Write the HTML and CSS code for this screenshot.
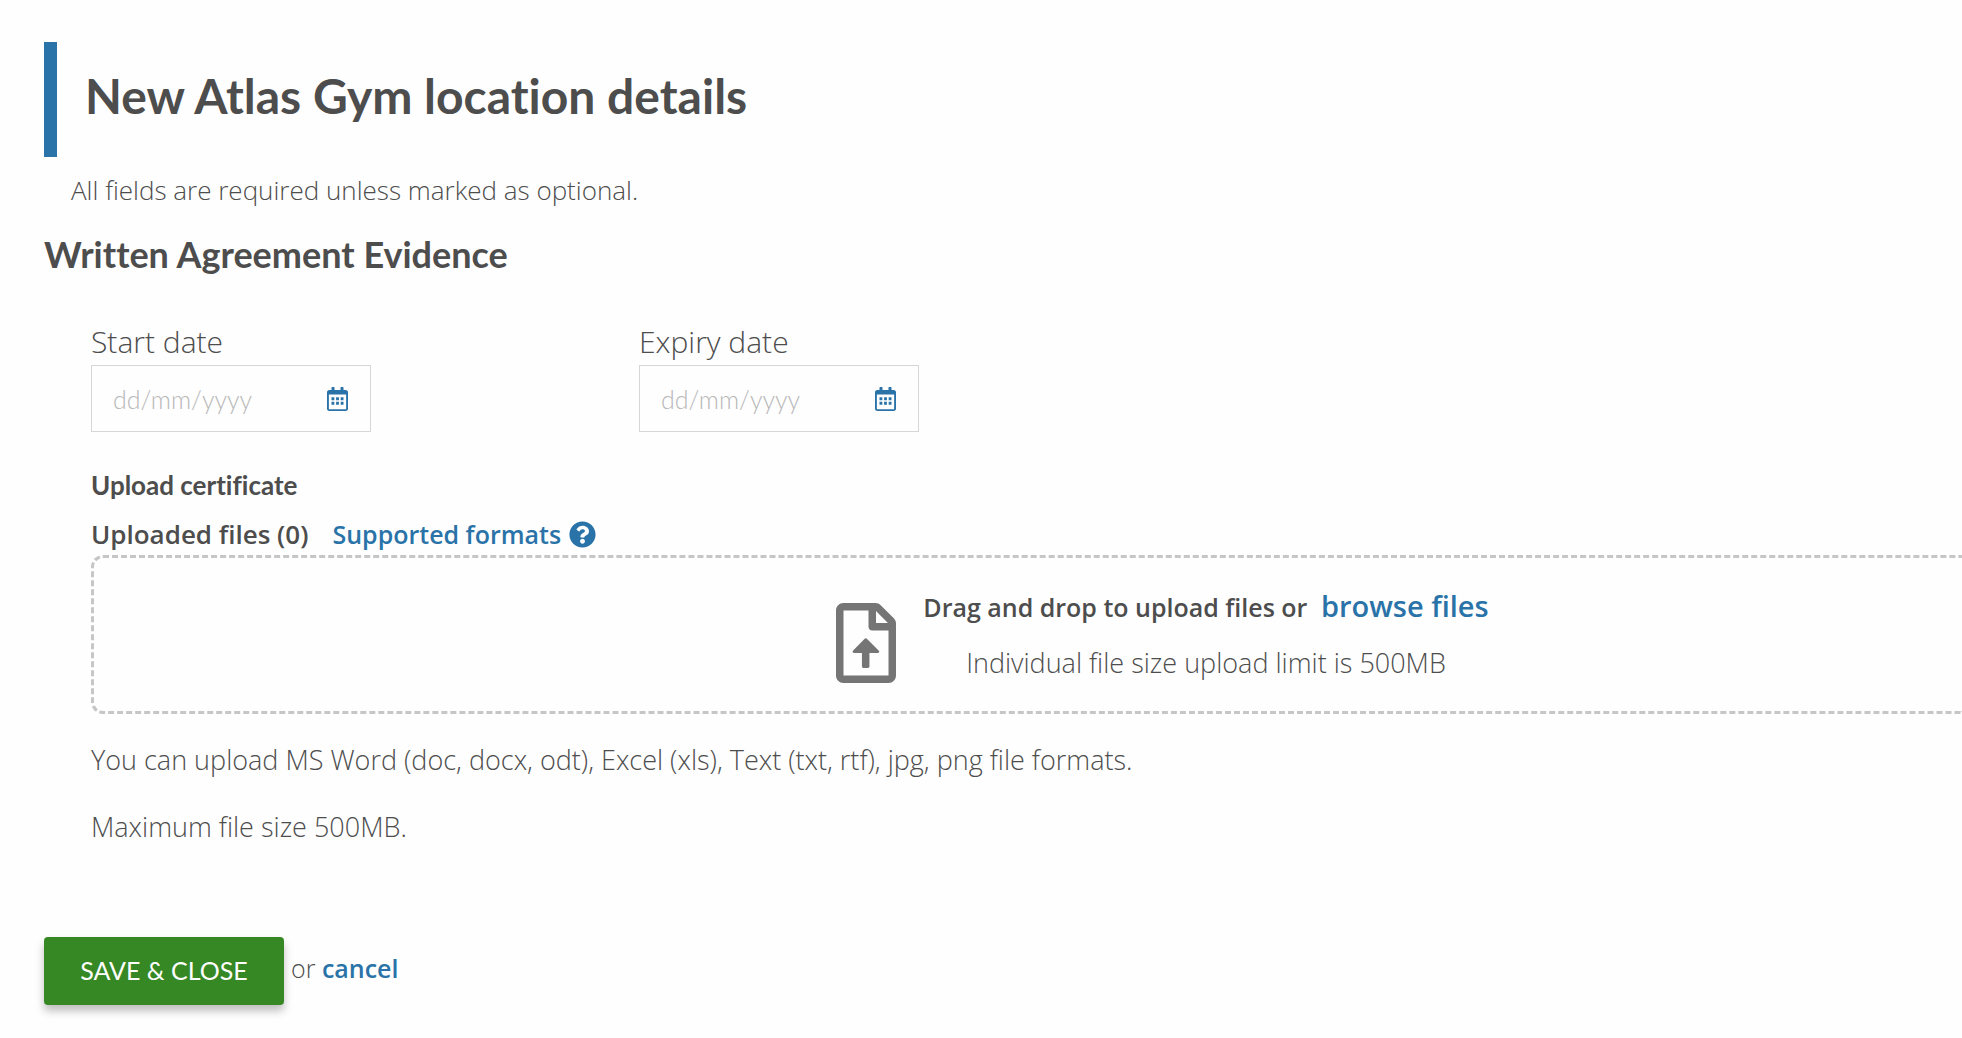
FILE: index.html
```html
<!DOCTYPE html>
<html lang="en">
<head>
<meta charset="utf-8">
<meta name="viewport" content="width=device-width, initial-scale=1">
<title>New Atlas Gym location details</title>
<link rel="stylesheet" href="styles.css">
</head>
<body>
<main class="page">
  <h1 class="page-title">New Atlas Gym location details</h1>
  <p class="intro">All fields are required unless marked as optional.</p>
  <form>
    <h2 class="section-title">Written Agreement Evidence</h2>
    <div class="section">
      <div class="dates">
        <div class="field">
          <label for="start-date">Start date</label>
          <div class="date-box">
            <input id="start-date" type="text" placeholder="dd/mm/yyyy">
            <button class="icon-button" type="button" aria-label="Choose start date">
              <svg class="calendar" viewBox="0 0 448 512" aria-hidden="true"><path d="M400 64h-48V12c0-6.600-5.400-12-12-12h-40c-6.600 0-12 5.400-12 12v52H160V12c0-6.600-5.400-12-12-12h-40c-6.600 0-12 5.400-12 12v52H48C21.500 64 0 85.500 0 112v352c0 26.500 21.500 48 48 48h352c26.500 0 48-21.500 48-48V112c0-26.500-21.500-48-48-48zm8 402c0 3.300-2.700 6-6 6H46c-3.300 0-6-2.700-6-6V160h368zM96 220h60v60H96zm98 0h60v60h-60zm98 0h60v60h-60zM96 316h60v60H96zm98 0h60v60h-60zm98 0h60v60h-60z"/></svg>
            </button>
          </div>
        </div>
        <div class="field">
          <label for="expiry-date">Expiry date</label>
          <div class="date-box">
            <input id="expiry-date" type="text" placeholder="dd/mm/yyyy">
            <button class="icon-button" type="button" aria-label="Choose expiry date">
              <svg class="calendar" viewBox="0 0 448 512" aria-hidden="true"><path d="M400 64h-48V12c0-6.600-5.400-12-12-12h-40c-6.600 0-12 5.400-12 12v52H160V12c0-6.600-5.400-12-12-12h-40c-6.600 0-12 5.400-12 12v52H48C21.500 64 0 85.500 0 112v352c0 26.500 21.500 48 48 48h352c26.500 0 48-21.500 48-48V112c0-26.500-21.500-48-48-48zm8 402c0 3.300-2.700 6-6 6H46c-3.300 0-6-2.700-6-6V160h368zM96 220h60v60H96zm98 0h60v60h-60zm98 0h60v60h-60zM96 316h60v60H96zm98 0h60v60h-60zm98 0h60v60h-60z"/></svg>
            </button>
          </div>
        </div>
      </div>
      <h3 class="upload-title">Upload certificate</h3>
      <div class="upload-bar">
        <span class="strong">Uploaded files (0)</span>
        <a class="formats" href="#formats">Supported formats
          <svg class="help" viewBox="0 0 512 512" aria-hidden="true"><path d="M504 256c0 137-111 248-248 248S8 393 8 256C8 119.100 119 8 256 8s248 111.100 248 248zM262.700 90c-54.500 0-89.300 23-116.500 63.800-3.500 5.300-2.400 12.400 2.700 16.300l34.700 26.300c5.200 3.900 12.600 3 16.700-2.100 17.900-22.700 30.100-35.800 57.300-35.800 20.400 0 45.700 13.100 45.700 33 0 15-12.400 22.700-32.500 34C247.100 238.500 216 254.900 216 296v4c0 6.600 5.400 12 12 12h56c6.600 0 12-5.400 12-12v-1.300c0-28.500 83.200-29.600 83.200-106.700 0-58-60.200-102-116.500-102zM256 338c-25.400 0-46 20.600-46 46s20.600 46 46 46 46-20.600 46-46-20.600-46-46-46z"/></svg>
        </a>
      </div>
      <div class="dropzone">
        <svg class="file" viewBox="0 0 384 512" aria-hidden="true"><path d="M369.900 98L286 14C277 5 264.800 0 252.100 0H48C21.500 0 0 21.500 0 48v416c0 26.500 21.500 48 48 48h288c26.500 0 48-21.500 48-48V131.900c0-12.700-5.100-25-14.100-33.900zM332.100 128H256V51.900l76.100 76.100zM48 464V48h160v104c0 13.300 10.700 24 24 24h104v288H48z"/><path d="M199 230l72 72c11 10 4 18-5 18h-52v84c0 7-5 12-12 12h-24c-7 0-12-5-12-12v-84h-46c-15 0-18-10-9-18l71-72c5-5 12-5 17 0z"/></svg>
        <div class="drop-text">
          <p class="drop-main">Drag and drop to upload files or <button class="browse" type="button">browse files</button></p>
          <p>Individual file size upload limit is 500MB</p>
        </div>
      </div>
      <div class="notes" id="formats">
        <p>You can upload MS Word (doc, docx, odt), Excel (xls), Text (txt, rtf), jpg, png file formats.</p>
        <p>Maximum file size 500MB.</p>
      </div>
    </div>
    <div class="actions">
      <button class="save" type="submit">SAVE &amp; CLOSE</button>
      <span class="alternative">or <a class="cancel" href="#cancel">cancel</a></span>
    </div>
  </form>
</main>
</body>
</html>
```
FILE: styles.css
```css
* { box-sizing: border-box; }
body {
  margin: 0;
  background: #fefefe;
  color: #4d4d4d;
  font: 300 27px/36px "Open Sans", "Noto Sans", sans-serif;
  font-variant-ligatures: none;
}
h1, h2, h3, p { margin: 0; }
button, input { font: inherit; }
a { color: #2a73a8; text-decoration: none; }
.page { padding: 42px 0 32px 44px; }
.page-title {
  padding: 24px 24px 32px 28px;
  border-left: 13px solid #2a73a8;
  font-family: Lato, sans-serif;
  font-size: 48px;
  line-height: 59px;
  font-weight: 700;
}
.intro { margin: 15px 0 0 27px; font-size: 26px; }
.section-title {
  margin-top: 24px;
  font-family: Lato, sans-serif;
  font-size: 36px;
  line-height: 44px;
  font-weight: 700;
}
.section { padding: 48px 0 0 47px; }
.dates { display: flex; gap: 268px; }
.field { display: flex; flex-direction: column; gap: 5px; width: 280px; }
.field label { font-size: 30px; }
.date-box {
  display: flex;
  align-items: center;
  height: 67px;
  padding: 0 22px 0 21px;
  border: 1px solid #d6d6d6;
}
.date-box input {
  flex: 1;
  min-width: 0;
  padding: 0;
  border: 0;
  outline: 0;
  background: transparent;
  color: #4d4d4d;
  font-family: Lato, sans-serif;
  font-size: 25px;
}
.date-box input::placeholder { color: #b8b8b8; opacity: 1; }
.icon-button { display: flex; padding: 0; border: 0; background: none; cursor: pointer; }
svg { display: block; flex: none; }
.calendar { width: 21px; height: 24px; fill: #2a73a8; }
.upload-title {
  margin-top: 35px;
  font-family: Lato, sans-serif;
  font-size: 26px;
  line-height: 36px;
  font-weight: 700;
}
.upload-bar { display: flex; gap: 24px; margin-top: 13px; }
.strong { font-size: 26px; font-weight: 600; }
.formats { display: flex; align-items: center; gap: 8px; font-size: 25px; font-weight: 600; }
.help { width: 27px; height: 27px; fill: #2a73a8; }
.dropzone {
  display: flex;
  justify-content: center;
  align-items: center;
  gap: 27px;
  margin-top: 3px;
  padding: 29px 0 28px 269px;
  border: 3px dashed #c6c6c6;
  border-right: 0;
  border-radius: 12px 0 0 12px;
}
.file { width: 60px; height: 80px; margin-top: 16px; fill: #757575; }
.drop-text { display: flex; flex-direction: column; gap: 20px; text-align: center; }
.drop-main { font-size: 25px; font-weight: 600; }
.browse {
  margin-left: 7px;
  padding: 0;
  border: 0;
  background: none;
  color: #2a73a8;
  font-size: 29px;
  line-height: 29px;
  cursor: pointer;
}
.notes { display: flex; flex-direction: column; gap: 31px; margin-top: 28px; }
.actions { display: flex; align-items: center; gap: 7px; margin-top: 92px; font-size: 25px; }
.save {
  min-width: 240px;
  height: 68px;
  padding: 0 24px 2px;
  border: 0;
  border-radius: 4px;
  background: #358823;
  box-shadow: 0 6px 8px rgba(0, 0, 0, .25);
  color: #fefefe;
  font-family: Lato, sans-serif;
  font-weight: 400;
  cursor: pointer;
}
.alternative { padding-bottom: 7px; }
.cancel { font-weight: 600; }
```
